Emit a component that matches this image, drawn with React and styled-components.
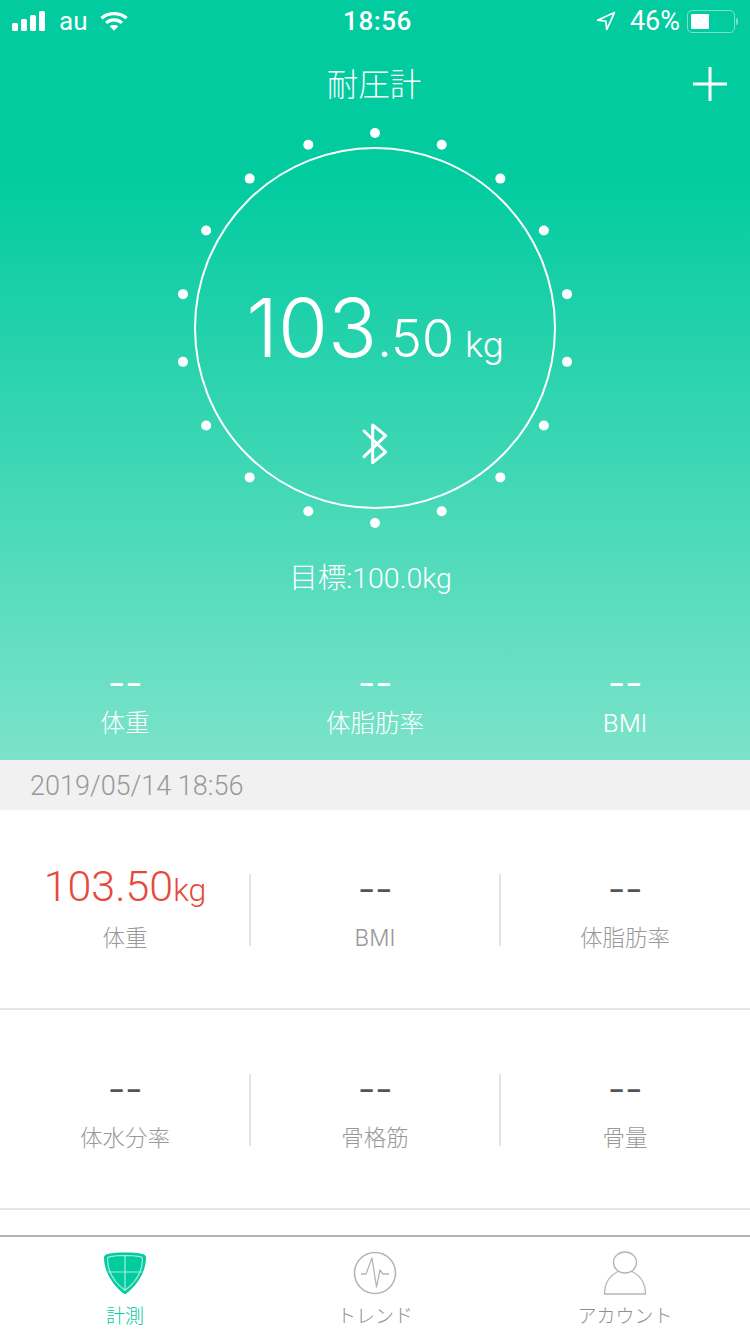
import styled, { createGlobalStyle } from 'styled-components';

const GlobalStyle = createGlobalStyle`
  html, body {
    margin: 0;
    padding: 0;
    background: #fff;
  }
  body {
    font-family: Roboto, "Noto Sans CJK JP", sans-serif;
  }
`;

const Page = styled.div`
  width: 750px;
  height: 1334px;
  display: flex;
  flex-direction: column;
  overflow: hidden;
`;

const Hero = styled.div`
  height: 760px;
  flex: none;
  display: flex;
  flex-direction: column;
  color: #fff;
  background: linear-gradient(180deg, #02cba0 0%, #02cba0 23%, #7be3ca 100%);
`;

const StatusBar = styled.div`
  height: 42px;
  padding: 0 12px;
  display: grid;
  grid-template-columns: 1fr auto 1fr;
  align-items: center;
  font-size: 26px;
  font-family: Roboto, sans-serif;
`;

const StatusLeft = styled.div`
  display: flex;
  align-items: center;
  gap: 13px;
`;

const StatusRight = styled.div`
  display: flex;
  align-items: center;
  justify-content: flex-end;
  gap: 14px;
  font-size: 27px;
`;

const Time = styled.span`
  margin-left: 5px;
  font-weight: 500;
  letter-spacing: 0.6px;
`;

const Battery = styled.div`
  display: flex;
  align-items: center;
  gap: 1px;
  margin-left: -7px;
`;

const BatteryBody = styled.div`
  width: 48px;
  height: 23px;
  box-sizing: border-box;
  padding: 3px;
  border: 1.5px solid rgba(255, 255, 255, 0.45);
  border-radius: 5px;
`;

const BatteryFill = styled.div`
  height: 100%;
  background: #fff;
  border-radius: 1px;
`;

const BatteryCap = styled.div`
  width: 2px;
  height: 7px;
  background: rgba(255, 255, 255, 0.45);
  border-radius: 0 2px 2px 0;
`;

const NavBar = styled.div`
  height: 86px;
  position: relative;
  display: flex;
  align-items: center;
  justify-content: center;
  padding: 0 2px 6px 0;
  box-sizing: border-box;
`;

const Title = styled.h1`
  margin: 0;
  font-size: 31.5px;
  font-weight: 300;
  font-family: "Noto Sans CJK JP", sans-serif;
`;

const AddButton = styled.div`
  position: absolute;
  right: 23px;
  top: 25px;
  width: 34px;
  height: 34px;
`;

const Dial = styled.div`
  position: relative;
  width: 412px;
  height: 412px;
  margin: -6px auto 0;
  flex: none;
`;

const Reading = styled.div`
  position: absolute;
  left: 0;
  right: 0;
  top: 166px;
  display: flex;
  justify-content: center;
  align-items: baseline;
  font-family: Inter, sans-serif;
  font-weight: 300;
  line-height: 1;
`;

const ReadingMain = styled.span`
  font-size: 81px;
`;

const ReadingDecimal = styled.span`
  font-size: 52px;
`;

const ReadingUnit = styled.span`
  font-size: 35px;
  margin-left: 11px;
`;

const BluetoothMark = styled.div`
  position: absolute;
  left: 186px;
  top: 301px;
  width: 40px;
  height: 44px;
`;

const Goal = styled.div`
  margin-top: 25px;
  padding-right: 9px;
  text-align: center;
  font-size: 28.5px;
  line-height: 40px;
  font-weight: 300;
`;

const HeroStats = styled.div`
  margin-top: 71px;
  display: grid;
  grid-template-columns: repeat(3, 1fr);
`;

const HeroStat = styled.div`
  display: flex;
  flex-direction: column;
  align-items: center;
`;

const HeroDash = styled.div`
  font-size: 24px;
  line-height: 30px;
  letter-spacing: 2px;
  margin-right: -2px;
  font-weight: 700;
`;

const HeroLabel = styled.div`
  margin-top: 5px;
  font-family: Inter, "Noto Sans CJK JP", sans-serif;
  font-size: 24.5px;
  line-height: 36px;
  font-weight: 300;
`;

const DateBar = styled.div`
  height: 50px;
  flex: none;
  box-sizing: border-box;
  padding: 2px 0 0 30px;
  display: flex;
  align-items: center;
  background: #f1f1f1;
  color: #999;
  font-size: 27px;
  font-weight: 300;
`;

const Grid = styled.div`
  flex: 1;
  background: #fff;
`;

const MetricRow = styled.div`
  height: 200px;
  box-sizing: border-box;
  padding-top: 2px;
  display: grid;
  grid-template-columns: repeat(3, 1fr);
  align-items: center;
  border-bottom: 2px solid #e6e6e6;
`;

const Metric = styled.div`
  height: 72px;
  display: flex;
  flex-direction: column;
  align-items: center;
  justify-content: center;
  padding-left: ${(p) => (p.$last ? '0' : '1px')};
  margin-right: ${(p) => (p.$last ? '0' : '-1px')};
  border-right: ${(p) => (p.$last ? 'none' : '2px solid #e4e4e4')};
`;

const MetricValue = styled.div`
  height: 44px;
  margin-top: -14px;
  display: flex;
  align-items: baseline;
  justify-content: center;
  line-height: 44px;
  color: ${(p) => (p.$alert ? '#e8493c' : '#555')};
  font-size: ${(p) => (p.$alert ? '43px' : '24px')};
  letter-spacing: ${(p) => (p.$alert ? '0' : '2px')};
  margin-right: ${(p) => (p.$alert ? '0' : '-2px')};
  transform: translateY(${(p) => (p.$alert ? '-2px' : '3px')});
  font-weight: ${(p) => (p.$alert ? 300 : 700)};
`;

const MetricUnit = styled.span`
  font-size: 32px;
  font-weight: 300;
`;

const MetricLabel = styled.div`
  margin-top: 12px;
  margin-bottom: -14px;
  color: #999;
  font-family: Inter, "Noto Sans CJK JP", sans-serif;
  font-size: 22.5px;
  line-height: 32px;
  font-weight: 300;
`;

const TabBar = styled.nav`
  height: 99px;
  flex: none;
  box-sizing: border-box;
  border-top: 2px solid #b4b4b4;
  background: #fff;
  display: grid;
  grid-template-columns: repeat(3, 1fr);
`;

const Tab = styled.div`
  display: flex;
  flex-direction: column;
  align-items: center;
  padding-top: 14px;
  color: ${(p) => (p.$active ? '#00cc9e' : '#8f8f8f')};
`;

const TabLabel = styled.span`
  margin-top: 8px;
  font-size: 19px;
  line-height: 28px;
  font-weight: 300;
`;

const DOTS = Array.from({ length: 18 }, (_, i) => {
  const a = (i * 20 * Math.PI) / 180;
  return { cx: 206 + 195 * Math.sin(a), cy: 206 - 195 * Math.cos(a) };
});

const TOP_STATS = ['体重', '体脂肪率', 'BMI'];
const ROWS = [
  [{ label: '体重', value: '103.50', unit: 'kg' }, { label: 'BMI' }, { label: '体脂肪率' }],
  [{ label: '体水分率' }, { label: '骨格筋' }, { label: '骨量' }],
];
const DASH = '––';

const SignalIcon = () => (
  <svg width="34" height="20" viewBox="0 0 34 20" fill="#fff">
    <rect x="0" y="12" width="6" height="8" rx="1.5" />
    <rect x="9" y="8" width="6" height="12" rx="1.5" />
    <rect x="18" y="4" width="6" height="16" rx="1.5" />
    <rect x="27" y="0" width="6" height="20" rx="1.5" />
  </svg>
);

const WifiIcon = () => (
  <svg width="28" height="21" viewBox="0 0 30 22" fill="none" stroke="#fff" strokeWidth="3.4">
    <path d="M1.5 7.5C9 .8 21 .8 28.5 7.5" />
    <path d="M6.5 12.5c5-4.3 12-4.3 17 0" />
    <path d="M15 21l-4.6-4.8c2.6-2 6.6-2 9.2 0z" fill="#fff" stroke="none" />
  </svg>
);

const LocationIcon = () => (
  <svg width="20" height="20" viewBox="0 0 20 20" fill="none" stroke="#fff" strokeWidth="1.8" strokeLinejoin="round">
    <path d="M18.5 1.5L1.5 9.2l8.300 1 1 8.300z" />
  </svg>
);

const ShieldIcon = () => (
  <svg width="44" height="44" viewBox="0 0 44 44">
    <path d="M22 1.500c7 0 13 .3 17.500 1.500 2 .5 3.500 1.500 3.500 3.500C43 20 35 34 22 43.500 9 34 1 20 1 6.500 1 4.500 2.500 3.500 4.500 3 9 1.800 15 1.500 22 1.500z" fill="#00cc9e" />
    <path d="M22 4.500c6 0 11 .4 15 1.200 1.500 .3 2.500 1 2.500 2.300 0 11.500-6.500 23-17.500 31.500C11 31 4.500 19.500 4.500 8c0-1.300 1-2 2.500-2.300 4-.8 9-1.200 15-1.200zM22 4.500V39.500M4.800 21h34.400" fill="none" stroke="rgba(255,255,255,.65)" strokeWidth="1.200" />
  </svg>
);

const PulseIcon = () => (
  <svg width="44" height="44" viewBox="0 0 44 44" fill="none" stroke="#b5b5b5">
    <circle cx="22" cy="22" r="20.500" strokeWidth="1.600" />
    <path d="M8 23h5L19 7l4.500 29L27 19l3 4h6" strokeWidth="1.300" strokeLinejoin="round" />
  </svg>
);

const PersonIcon = () => (
  <svg width="44" height="44" viewBox="0 0 44 44" fill="none" stroke="#b5b5b5" strokeWidth="1.300">
    <ellipse cx="22" cy="11.500" rx="11.500" ry="10.500" />
    <path d="M15 20.500C8 24 1.500 31 1.500 43h41c0-12-6.500-19-13.500-22.500" />
  </svg>
);

const App = () => (
  <Page>
    <GlobalStyle />
    <Hero>
      <StatusBar>
        <StatusLeft>
          <SignalIcon />
          <span>au</span>
          <WifiIcon />
        </StatusLeft>
        <Time>18:56</Time>
        <StatusRight>
          <LocationIcon />
          <span>46%</span>
          <Battery>
            <BatteryBody>
              <BatteryFill style={{ width: '46%' }} />
            </BatteryBody>
            <BatteryCap />
          </Battery>
        </StatusRight>
      </StatusBar>
      <NavBar>
        <Title>耐圧計</Title>
        <AddButton>
          <svg width="34" height="34" viewBox="0 0 34 34" stroke="#fff" strokeWidth="3">
            <path d="M17 0v34M0 17h34" />
          </svg>
        </AddButton>
      </NavBar>
      <Dial>
        <svg width="412" height="412" viewBox="0 0 412 412">
          <circle cx="206" cy="206" r="180" fill="none" stroke="#fff" strokeWidth="2" />
          {DOTS.map((d) => (
            <circle key={`${d.cx}-${d.cy}`} cx={d.cx} cy={d.cy} r="5" fill="#fff" />
          ))}
        </svg>
        <Reading>
          <ReadingMain>103</ReadingMain>
          <ReadingDecimal>.50</ReadingDecimal>
          <ReadingUnit>kg</ReadingUnit>
        </Reading>
        <BluetoothMark>
          <svg width="40" height="44" viewBox="0 0 40 44" fill="none" stroke="#fff" strokeWidth="3" strokeLinecap="round" strokeLinejoin="round">
            <path d="M9 8l21.700 21-13 10.700V2l13 10.700L9 33.700" />
          </svg>
        </BluetoothMark>
      </Dial>
      <Goal>目標:100.0kg</Goal>
      <HeroStats>
        {TOP_STATS.map((label) => (
          <HeroStat key={label}>
            <HeroDash>{DASH}</HeroDash>
            <HeroLabel>{label}</HeroLabel>
          </HeroStat>
        ))}
      </HeroStats>
    </Hero>
    <DateBar>2019/05/14 18:56</DateBar>
    <Grid>
      {ROWS.map((row) => (
        <MetricRow key={row[0].label}>
          {row.map((m, i) => (
            <Metric key={m.label} $last={i === row.length - 1}>
              <MetricValue $alert={!!m.value}>
                {m.value || DASH}
                {m.unit && <MetricUnit>{m.unit}</MetricUnit>}
              </MetricValue>
              <MetricLabel>{m.label}</MetricLabel>
            </Metric>
          ))}
        </MetricRow>
      ))}
    </Grid>
    <TabBar>
      <Tab $active>
        <ShieldIcon />
        <TabLabel>計測</TabLabel>
      </Tab>
      <Tab>
        <PulseIcon />
        <TabLabel>トレンド</TabLabel>
      </Tab>
      <Tab>
        <PersonIcon />
        <TabLabel>アカウント</TabLabel>
      </Tab>
    </TabBar>
  </Page>
);

export default App;
